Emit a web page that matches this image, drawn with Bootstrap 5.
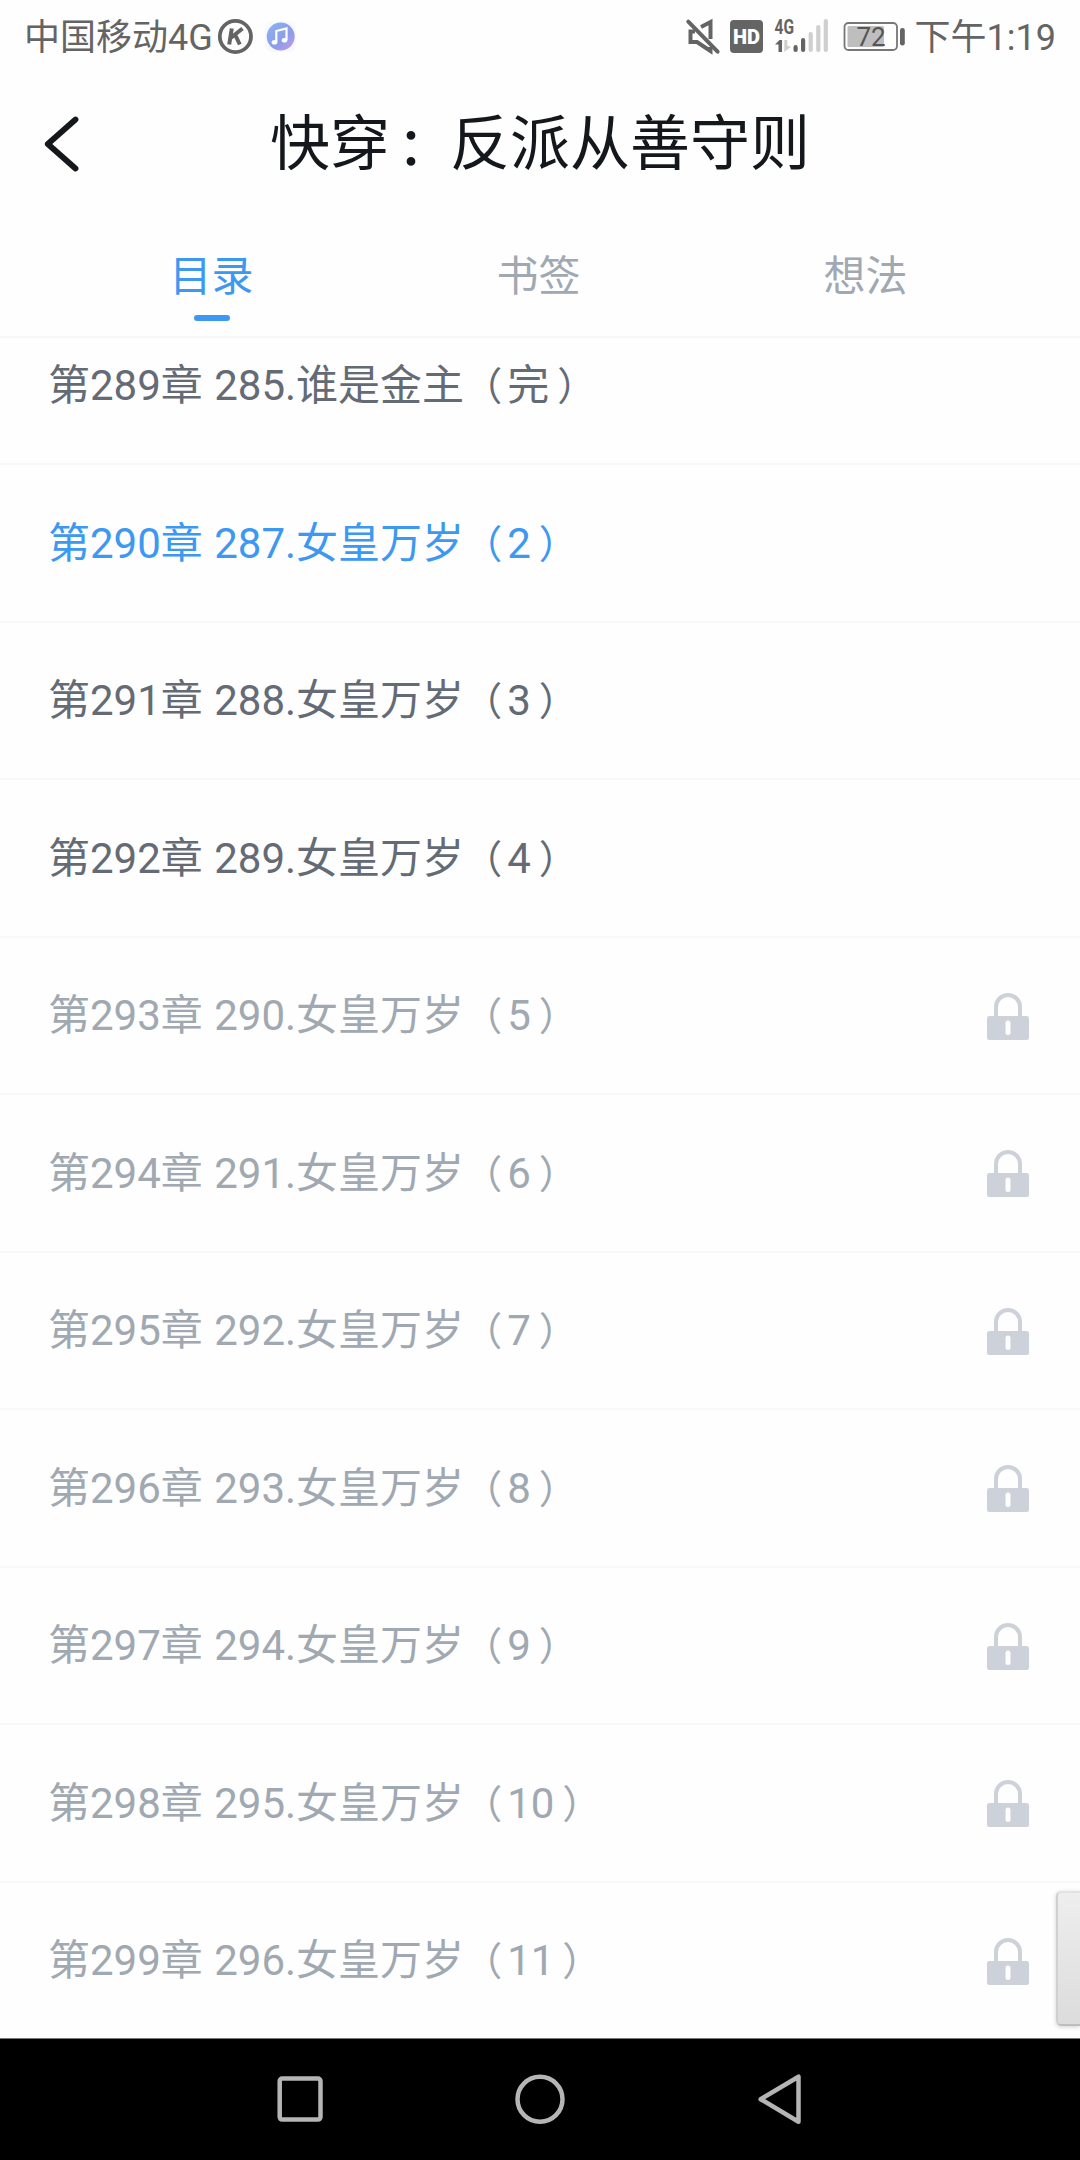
<!DOCTYPE html>
<html lang="zh-CN">
<head>
<meta charset="utf-8">
<meta name="viewport" content="width=device-width, initial-scale=1">
<title>快穿：反派从善守则</title>
<link href="https://cdn.jsdelivr.net/npm/bootstrap@5.3.0/dist/css/bootstrap.min.css" rel="stylesheet">
<style>
  body { font-family: Roboto, "Noto Sans CJK SC", sans-serif; background: #fefefe; height: 2160px; overflow: hidden; }
  .statusbar { height: 74px; padding: 0 24px; color: #646464; font-size: 36px; line-height: 72px; }
  .statusbar span { margin-top: 2px; }
  .titlebar { height: 144px; padding-left: 44px; padding-right: 44px; color: #14181c; }
  .titlebar h1 { font-size: 60px; line-height: 60px; font-weight: 400; margin-top: 41px; }
  .titlebar svg { margin-top: 40px; }
  .colon { padding-left: 8px; font-size: 52px; font-weight: 500; }
  .side { width: 36px; }
  .tabs { height: 120px; padding: 0 51px 0 48px; border-bottom: 2px solid #f6f7f8; }
  .tabs .nav-link { height: 118px; padding: 37px 0 0; font-size: 42px; line-height: 44px; color: #a0a8b1; border: 0; }
  .tabs .nav-link.active { color: #3d98f2; }
  .tabs .nav-link.active::after { content: ""; display: block; width: 36px; height: 6px; border-radius: 3px; background: #3d98f2; margin: 16px auto 0; }
  .chapters { min-height: 0; }
  .chapter { height: 157.5px; flex: none; padding: 2px 51px 0 48px; border-top: 2px solid #f6f8f9; font-size: 42px; line-height: 60px; color: #646b75; white-space: pre; word-spacing: 1px; }
  .chapter.current { color: #3d98f2; }
  .chapter.locked { color: #a0a8b1; }
  .paren { font-size: 39px; line-height: 1; }
  .po { margin-left: -1px; margin-right: 5px; }
  .pc { margin-left: 8px; }
  .thumb { right: 0; top: 1891px; width: 24px; height: 135px; border: 2px solid #d0d0d0; border-right: 0; border-top-color: #e2e2e2; border-bottom-color: #bdbdbd; border-radius: 5px 0 0 5px; background: linear-gradient(#eeeeee, #dcdcdc); box-shadow: 0 1px 4px rgba(0,0,0,.18); }
  .sysnav { height: 122px; background: #000; border-top: 1px solid #777; padding: 0 275px; }
</style>
</head>
<body class="d-flex flex-column position-relative">

<header class="statusbar d-flex align-items-center justify-content-between flex-shrink-0">
  <div class="d-flex align-items-center">
    <span>中国移动4G</span>
    <svg width="90" height="54" viewBox="213 10 90 54">
      <circle cx="235.4" cy="36.500" r="15.600" fill="none" stroke="#646464" stroke-width="3.800"/>
      <path d="M231.800 28.500L229.200 44.500M242.500 28.500L231 37.800M235.500 35.500L239.800 44.500" fill="none" stroke="#646464" stroke-width="4"/>
      <defs>
        <linearGradient id="mg" x1="0" y1="0" x2="1" y2="1">
          <stop offset="0" stop-color="#86b4f4"/><stop offset=".6" stop-color="#8f9ce8"/><stop offset="1" stop-color="#c79bec"/>
        </linearGradient>
      </defs>
      <rect x="265" y="21" width="31" height="31" rx="7" fill="#f9f8fc"/>
      <circle cx="280.700" cy="36.600" r="14" fill="url(#mg)"/>
      <path d="M276.300 42V31l10.200-2.500V40" fill="none" stroke="#fff" stroke-width="2.200"/>
      <ellipse cx="274.500" cy="42.300" rx="2.800" ry="2.300" fill="#fff"/><ellipse cx="284.500" cy="40.300" rx="2.800" ry="2.300" fill="#fff"/>
    </svg>
  </div>
  <div class="d-flex align-items-center">
    <svg width="231" height="54" viewBox="684 10 231 54">
      <g fill="none" stroke="#646464" stroke-width="4">
        <path d="M701 27l9.500-5V39M695 31.500h-4.500v10.500h6.500l13.500 9v-4"/>
        <path d="M688.300 21.700l29.300 30" stroke-linecap="round"/>
      </g>
      <rect x="730" y="20" width="33" height="33" rx="4" fill="#646464"/>
      <text x="746.500" y="43.500" text-anchor="middle" textLength="27" lengthAdjust="spacingAndGlyphs" font-size="20" font-weight="900" fill="#fff">HD</text>
      <text x="774.500" y="33.800" textLength="19.500" lengthAdjust="spacingAndGlyphs" font-size="20" font-weight="700" fill="#646464">4G</text>
      <path d="M775 44.500l4.500-4.500h2.500v12h-3.500v-7.500z" fill="#646464"/>
      <path d="M784.300 40v12l6.500-5-3.500-1.500V40z" fill="#cfcfcf"/>
      <g stroke-width="4.200" stroke-linecap="round">
        <path d="M795.600 47.200v2.800M803.100 40.200V50" stroke="#646464"/>
        <path d="M810.700 34V50M818.300 27V50M825.800 21.200V50" stroke="#cfcfcf"/>
      </g>
      <rect x="844.500" y="23" width="52.500" height="27" rx="4" fill="#fefefe" stroke="#777" stroke-width="1.800"/>
      <rect x="847.500" y="26" width="36.500" height="21" rx="1.500" fill="#bebebe"/>
      <text x="871" y="46" text-anchor="middle" font-size="26" fill="#555">72</text>
      <rect x="900" y="28" width="4.800" height="17.500" rx="2.300" fill="#646464"/>
    </svg>
    <span>下午1:19</span>
  </div>
</header>

<div class="titlebar d-flex align-items-start justify-content-between flex-shrink-0">
  <svg class="side" height="60" viewBox="44 74 36 60">
    <path d="M75.500 79.500L47.800 104 75.500 128.500" fill="none" stroke="#14181c" stroke-width="5.800" stroke-linecap="round" stroke-linejoin="round"/>
  </svg>
  <h1 class="mb-0 text-center">快穿<span class="colon">：</span>反派从善守则</h1>
  <span class="side"></span>
</div>

<ul class="tabs nav nav-fill nav-justified flex-shrink-0">
  <li class="nav-item"><a class="nav-link active" href="#">目录</a></li>
  <li class="nav-item"><a class="nav-link" href="#">书签</a></li>
  <li class="nav-item"><a class="nav-link" href="#">想法</a></li>
</ul>

<main id="chapters" class="chapters flex-grow-1 d-flex flex-column justify-content-end overflow-hidden"></main>

<div class="thumb position-absolute"></div>

<footer class="sysnav d-flex align-items-center justify-content-between flex-shrink-0">
  <svg width="50" height="54" viewBox="0 0 50 54" fill="none" stroke="#b5b5b5" stroke-width="4.500"><rect x="4.700" y="5.600" width="40.800" height="41" rx="2.500"/></svg>
  <svg width="54" height="54" viewBox="0 0 54 54" fill="none" stroke="#b5b5b5" stroke-width="4.500"><circle cx="27" cy="26.200" r="22.500"/></svg>
  <svg width="50" height="54" viewBox="0 0 50 54" fill="none" stroke="#b5b5b5" stroke-width="4.500" stroke-linejoin="round"><path d="M43.500 3.700v45L5.700 26.200z"/></svg>
</footer>

<script src="https://cdn.jsdelivr.net/npm/bootstrap@5.3.0/dist/js/bootstrap.bundle.min.js"></script>
<script>
  const lock = '<svg width="42" height="47" viewBox="0 0 42 47"><path d="M9 24V14a12 12 0 0 1 24 0v10" fill="none" stroke="#cdd1d9" stroke-width="4"/><rect y="23" width="42" height="24" rx="2.500" fill="#cdd1d9"/><rect x="18.500" y="27.500" width="5" height="14.500" rx="2.500" fill="#fefefe"/></svg>';
  const rows = [[289, '285.谁是金主', '完', '']];
  for (let i = 2; i <= 11; i++) {
    rows.push([288 + i, (285 + i) + '.女皇万岁', i, i === 2 ? 'current' : i > 4 ? 'locked' : '']);
  }
  document.getElementById('chapters').innerHTML = rows.map(([n, name, part, state]) =>
    `<div class="chapter d-flex align-items-center justify-content-between ${state}"><span>第${n}章 ${name}<span class="paren po">（</span>${part}<span class="paren pc">）</span></span>${state === 'locked' ? lock : ''}</div>`).join('');
</script>
</body>
</html>
